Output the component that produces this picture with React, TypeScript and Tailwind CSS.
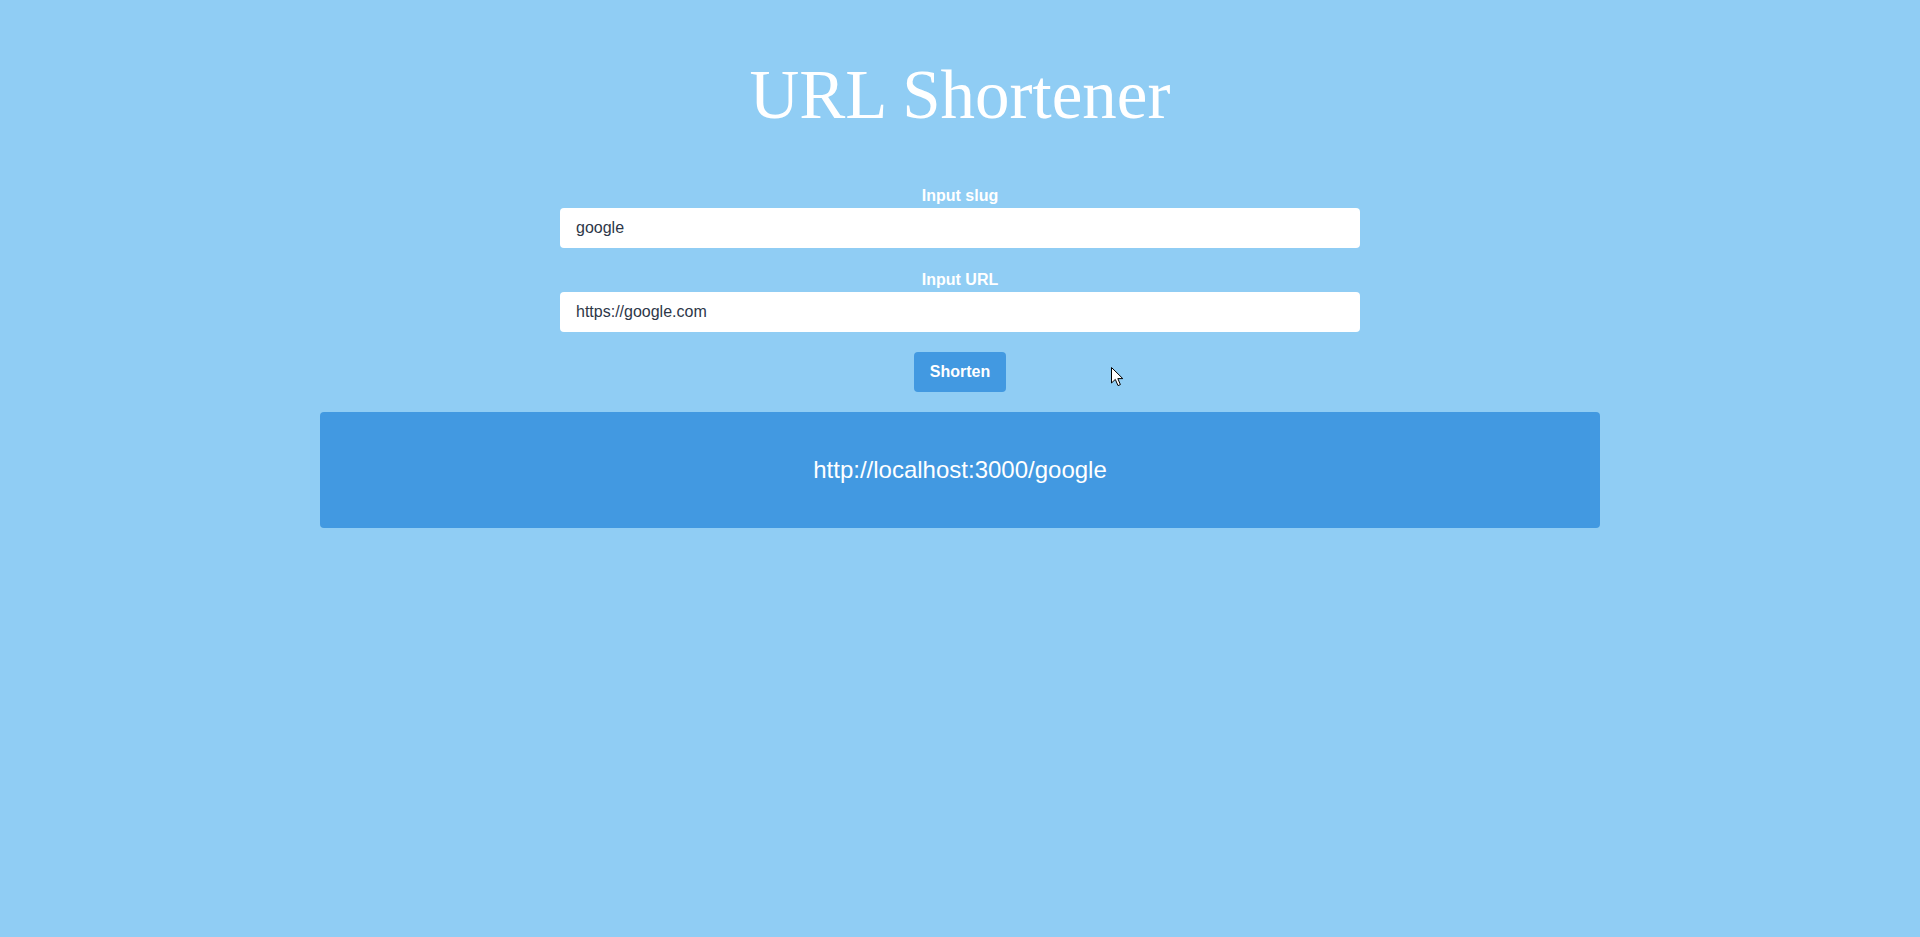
export default function App() {
  return (
    <div className="relative min-h-[937px] w-full bg-[#90cdf4] font-['Liberation_Sans',Arial,sans-serif]">
      <div className="flex flex-col items-center">
        <h1 className="mt-[61px] text-[69px] leading-[69px] text-white font-['Liberation_Serif',Georgia,serif]">
          URL Shortener
        </h1>

        <form className="mt-[54px] flex flex-col items-center" onSubmit={(e) => e.preventDefault()}>
          <label className="text-base leading-6 font-bold text-white">Input slug</label>
          <input
            className="h-10 w-[800px] rounded bg-white px-4 text-base text-[#2d3748] outline-none"
            defaultValue="google"
          />

          <label className="mt-5 text-base leading-6 font-bold text-white">Input URL</label>
          <input
            className="h-10 w-[800px] rounded bg-white px-4 text-base text-[#2d3748] outline-none"
            defaultValue="https://google.com"
          />

          <button
            type="submit"
            className="mt-5 rounded bg-[#4299e1] px-4 py-2 text-base leading-6 font-bold text-white"
          >
            Shorten
          </button>
        </form>

        <div className="mt-5 w-[1280px] rounded bg-[#4299e1] pt-[42px] pb-[42px] text-center text-2xl leading-8 text-white">
          http://localhost:3000/google
        </div>
      </div>

      {/* mouse pointer */}
      <svg className="absolute left-[1111px] top-[367px]" width="13" height="20" viewBox="0 0 13 20">
        <path
          d="M0.5 0.5 L0.5 16 L4.3 12.4 L7 18.6 L9.4 17.6 L6.8 11.6 L11.8 11.6 Z"
          fill="#fff"
          stroke="#000"
          strokeWidth="1"
          strokeLinejoin="miter"
        />
      </svg>
    </div>
  );
}
